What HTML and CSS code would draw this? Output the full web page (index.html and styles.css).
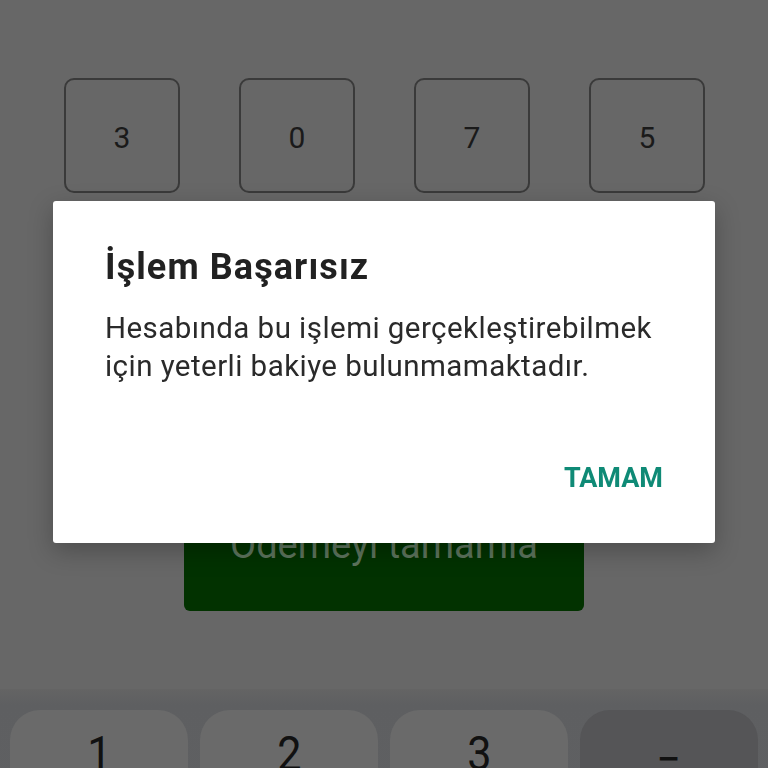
FILE: index.html
```html
<!DOCTYPE html>
<html lang="tr">
<head>
<meta charset="utf-8">
<link rel="stylesheet" href="styles.css">
</head>
<body>
<div class="screen">
  <div class="pin-row">
    <div class="pin-box">3</div>
    <div class="pin-box">0</div>
    <div class="pin-box">7</div>
    <div class="pin-box">5</div>
  </div>
  <div class="pay-wrap">
    <div class="pay-btn"><span class="pay-text">Ödemeyi tamamla</span></div>
  </div>
  <div class="keyboard">
    <div class="key"><span>1</span></div>
    <div class="key"><span>2</span></div>
    <div class="key"><span>3</span></div>
    <div class="key key-dark"><span>−</span></div>
  </div>
</div>
<div class="dialog">
  <h1 class="dialog-title">İşlem Başarısız</h1>
  <p class="dialog-body">Hesabında bu işlemi gerçekleştirebilmek için yeterli bakiye bulunmamaktadır.</p>
  <div class="dialog-actions"><span class="dialog-btn">TAMAM</span></div>
</div>
</body>
</html>
```

FILE: styles.css
```css
html, body {
  margin: 0;
  padding: 0;
}
body {
  width: 768px;
  height: 768px;
  overflow: hidden;
  background: #676767;
  font-family: Roboto, "Liberation Sans", sans-serif;
}
.screen {
  display: flex;
  flex-direction: column;
  height: 768px;
}
.pin-row {
  display: flex;
  gap: 59px;
  padding: 78px 0 0 64px;
}
.pin-box {
  width: 112px;
  height: 108px;
  padding-top: 3px;
  border: 2px solid #3a3a3a;
  border-radius: 10px;
  display: flex;
  align-items: center;
  justify-content: center;
  font-size: 30px;
  color: #1a1a1a;
}
.pay-wrap {
  display: flex;
  padding: 287px 0 0 184px;
}
.pay-btn {
  width: 400px;
  height: 131px;
  background: #023200;
  border-radius: 6px;
  display: flex;
  justify-content: center;
  padding-top: 45px;
  box-sizing: border-box;
}
.pay-text {
  color: #5d745d;
  font-size: 38px;
  line-height: 40px;
}
.keyboard {
  margin-top: 78px;
  flex: 1;
  background: linear-gradient(#646464 0, #5e5f61 16px, #5f6062 100%);
  display: flex;
  gap: 12px;
  padding: 21px 10px 0 10px;
}
.key {
  flex: 1;
  height: 100px;
  background: #6a6a6a;
  border-radius: 30px;
  display: flex;
  justify-content: center;
  padding-top: 20px;
  box-sizing: border-box;
}
.key span {
  font-size: 48px;
  line-height: 48px;
  color: #111;
  display: inline-block;
  transform: scaleX(0.9);
}
.key-dark {
  background: #555557;
}
.key-dark span {
  padding-top: 6px;
}
.dialog {
  position: fixed;
  left: 53px;
  top: 201px;
  width: 662px;
  height: 342px;
  box-sizing: border-box;
  background: #fff;
  border-radius: 3px;
  box-shadow: 0 8px 24px rgba(0,0,0,0.25);
  padding: 44px 52px 0 52px;
  display: flex;
  flex-direction: column;
}
.dialog-title {
  margin: 0;
  font-size: 36px;
  font-weight: 700;
  letter-spacing: 1.1px;
  line-height: 44px;
  color: #212121;
}
.dialog-body {
  margin: 20px 0 0 0;
  font-size: 29.5px;
  letter-spacing: 0.45px;
  line-height: 38px;
  color: #2a2a2a;
}
.dialog-actions {
  display: flex;
  justify-content: flex-end;
  margin-top: 78px;
}
.dialog-btn {
  font-size: 27px;
  font-weight: 700;
  line-height: 30px;
  color: #0f8a76;
}
```
